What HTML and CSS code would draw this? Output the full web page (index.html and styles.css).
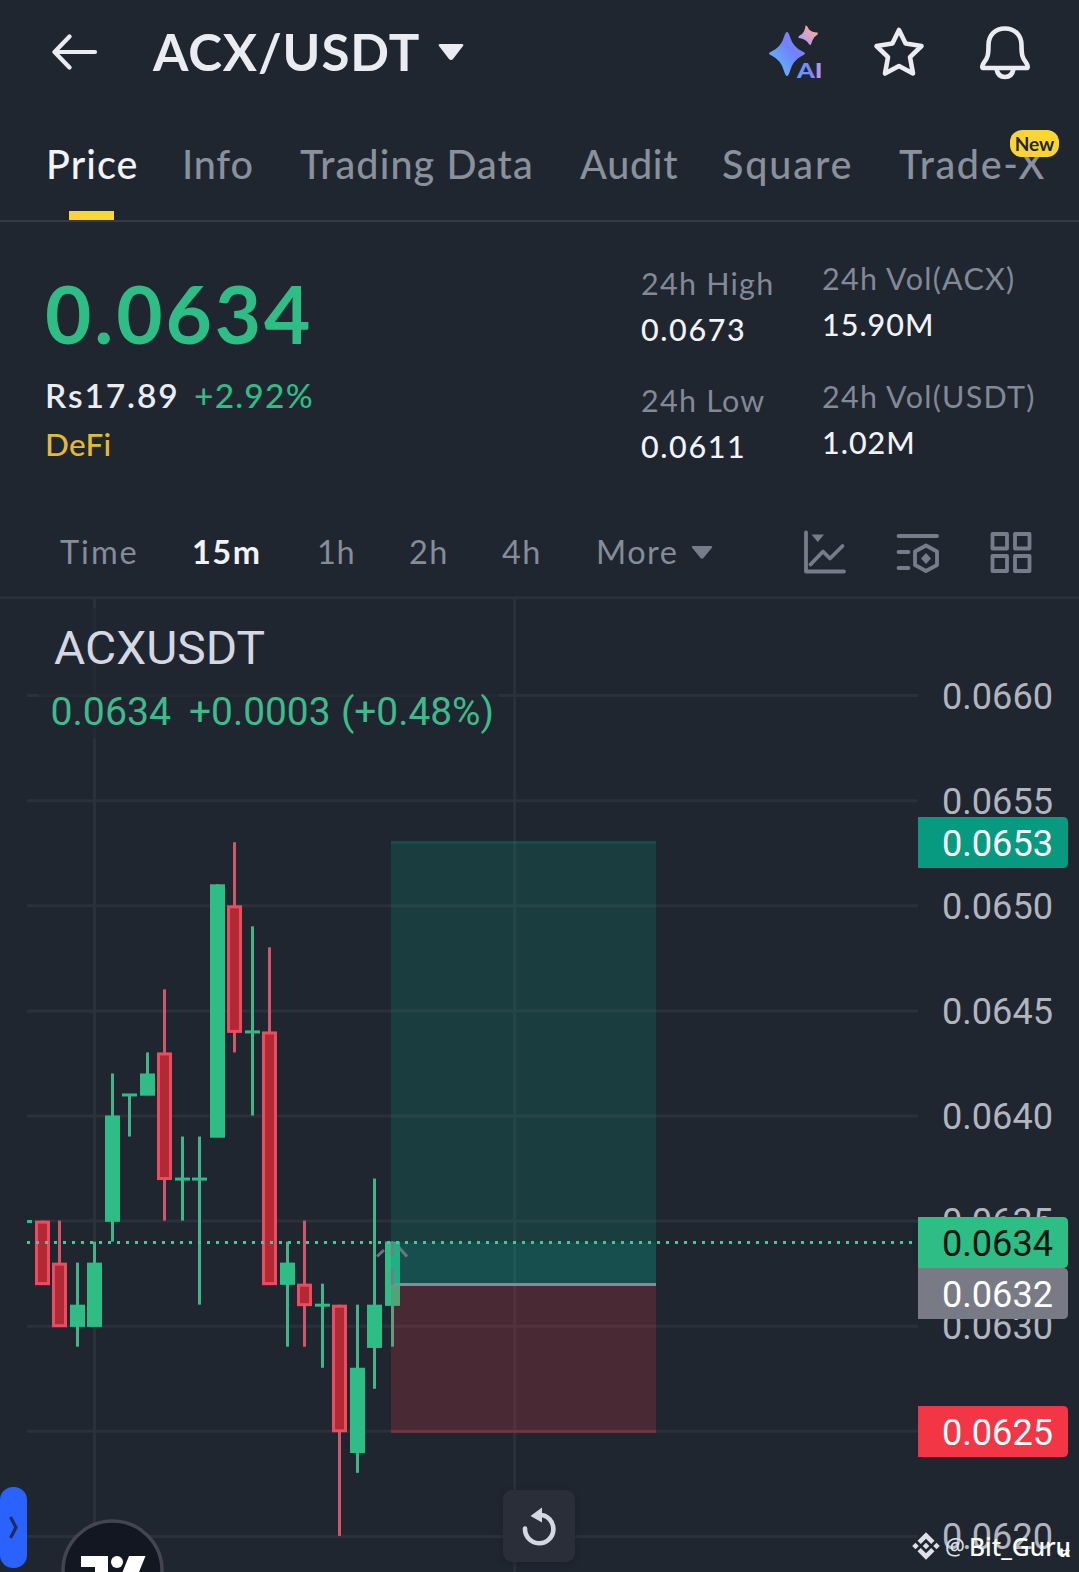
FILE: index.html
```html
<!DOCTYPE html>
<html lang="en">
<head>
<meta charset="utf-8">
<title>ACX/USDT</title>
<link rel="stylesheet" href="styles.css">
</head>
<body>
<main class="app">
  <header class="topbar">
    <svg class="back" width="46" height="36" viewBox="0 0 46 36"><path d="M17.500 2.500L2.500 18L17.500 33.500M3 18H43"/></svg>
    <h1 class="pair">ACX/USDT</h1>
    <svg class="pair-caret" width="26" height="18" viewBox="0 0 26 18"><path d="M2 1h22q2 0 1 2L15 16q-2 2-4 0L1 3Q0 1 2 1z"/></svg>
    <div class="actions">
      <svg width="56" height="56" viewBox="0 0 56 56">
        <defs>
          <linearGradient id="spark" x1="0" y1="1" x2="1" y2="0"><stop offset="0.200" stop-color="#62b2fb"/><stop offset="0.600" stop-color="#7082fb"/><stop offset="1" stop-color="#8a83fb"/></linearGradient>
          <linearGradient id="mini" x1="0" y1="1" x2="1" y2="0"><stop offset="0.200" stop-color="#b39cf5"/><stop offset="0.700" stop-color="#f0a6a8"/></linearGradient>
          <linearGradient id="ai"><stop offset="0" stop-color="#62a5fb"/><stop offset="0.550" stop-color="#7c83fb"/><stop offset="1" stop-color="#c79bea"/></linearGradient>
        </defs>
        <path fill="url(#spark)" d="M20 8Q21.500 8 23 13Q26 23 35.500 27.500Q40.500 29.500 35.500 31.500Q26 36 23 47Q20 57 17 47Q14 36 4.500 31.500Q-0.500 29.500 4.500 27.500Q14 23 17 13Q18.500 8 20 8z"/>
        <path fill="url(#mini)" d="M38.500 1.500Q40 1 42 5.500Q45 8.500 50.500 8.500Q52 10 47.500 13Q45 16 44 20.500Q42.500 22 40.500 18Q37 14.500 32 14Q30 12.500 34.500 10.500Q38 7.500 38.500 1.500z"/>
        <text class="ai-text" x="30" y="54" textLength="25.500" lengthAdjust="spacingAndGlyphs" fill="url(#ai)">AI</text>
      </svg>
      <svg class="stroke star" width="52" height="52" viewBox="0 0 52 52"><path d="M26 4L32.600 17.600L48.500 20L37 31.200L40 47.500L26 40L12 47.500L15 31.200L3.500 20L19.400 17.600Z"/></svg>
      <svg class="stroke bell" width="52" height="56" viewBox="0 0 52 56"><path d="M26 4.500C16 4.500 9.500 11.500 9.500 21C9.500 31 8.500 34.500 5 38.500Q1.500 44 5 44H47Q50.500 44 47 38.500C43.500 34.500 42.500 31 42.500 21C42.500 11.500 36 4.500 26 4.500Z"/><path d="M17.500 45C18.500 50.500 22 53 26 53S33.500 50.500 34.500 45"/></svg>
    </div>
  </header>

  <nav class="tabs">
    <a class="tab tab-price active">Price</a>
    <a class="tab tab-info">Info</a>
    <a class="tab tab-data">Trading Data</a>
    <a class="tab tab-audit">Audit</a>
    <a class="tab tab-square">Square</a>
    <a class="tab tab-x">Trade-X<span class="badge">New</span></a>
  </nav>

  <section class="ticker">
    <div class="quote">
      <div class="last">0.0634</div>
      <div class="fiat"><span class="rs">Rs17.89</span><span class="chg">+2.92%</span></div>
      <div class="tag">DeFi</div>
    </div>
    <dl class="stats stats-range">
      <dt>24h High</dt><dd>0.0673</dd>
      <dt>24h Low</dt><dd>0.0611</dd>
    </dl>
    <dl class="stats stats-vol">
      <dt>24h Vol(ACX)</dt><dd>15.90M</dd>
      <dt>24h Vol(USDT)</dt><dd>1.02M</dd>
    </dl>
  </section>

  <nav class="intervals">
    <a class="iv iv-time">Time</a>
    <a class="iv iv-15 active">15m</a>
    <a class="iv iv-1h">1h</a>
    <a class="iv iv-2h">2h</a>
    <a class="iv iv-4h">4h</a>
    <a class="iv iv-more">More<svg width="22" height="16" viewBox="0 0 22 16"><path d="M2 1h18q2 0 1 1.500L12.500 13q-1.500 1.500-3 0L1 2.500Q0 1 2 1z"/></svg></a>
    <div class="tools">
      <svg width="44" height="44" viewBox="0 0 44 44"><path d="M3 2.500V41.500H41M7.500 34.500L20 21.500L27 28.500L39.500 16"/><path class="solid" d="M8.500 4.500H21L14.800 12Z"/></svg>
      <svg width="44" height="44" viewBox="0 0 44 44"><path d="M2.500 6H41M2.500 22H12.500M2.500 38H12.500M30 15.500L41 21.500V35L30 41L19 35V21.500Z"/><path class="solid" d="M30 23L35 28.500L30 34L25 28.500Z"/></svg>
      <svg width="44" height="44" viewBox="0 0 44 44"><path d="M3.500 4H18V18.500H3.500ZM26 4H40.500V18.500H26ZM3.500 26H18V41H3.500ZM26 26H40.500V41H26Z"/></svg>
    </div>
  </nav>

  <section class="chart">
    <svg id="plot" width="1079" height="976" viewBox="0 596 1079 976">
      <g id="grid" class="grid"></g>
      <rect class="legend-shade" x="39" y="608" width="460" height="130"/>
      <g id="candles"></g>
      <rect class="profit" x="391" y="841" width="265" height="443.500"/>
      <rect class="profit" x="391" y="1242.500" width="265" height="42"/>
      <rect class="loss" x="391" y="1284.500" width="265" height="148.500"/>
      <path class="profit-edge" d="M391 842.500H656"/>
      <path class="loss-edge" d="M391 1431.500H656"/>
      <path class="entry" d="M391 1284.500H656"/>
      <path class="trend" d="M392.300 1285V1268M392.300 1256V1243M377 1256.500L384 1250M399 1247.500L407 1256.500"/>
      <path class="price-line" d="M27 1242.500H914"/>
      <text class="symbol" x="54" y="663.500" textLength="211" lengthAdjust="spacingAndGlyphs">ACXUSDT</text>
      <g class="change">
        <text x="50.500" y="725" textLength="120.500" lengthAdjust="spacingAndGlyphs">0.0634</text>
        <text x="189" y="725" textLength="141.500" lengthAdjust="spacingAndGlyphs">+0.0003</text>
        <text x="341" y="725" textLength="153" lengthAdjust="spacingAndGlyphs">(+0.48%)</text>
      </g>
      <g id="axis" class="axis"></g>
      <rect class="reset-shadow" x="502" y="1491" width="74" height="74" rx="10"/>
      <rect class="reset" x="503" y="1490" width="72" height="72" rx="9"/>
      <path class="reset-arc" d="M525 1528.500A14.200 14.200 0 1 0 539.500 1514.800"/>
      <path class="reset-head" d="M530.500 1516L542 1507.500V1522.500Z"/>
      <rect class="drawer" x="0" y="1487" width="27" height="81" rx="13"/>
      <path class="drawer-arrow" d="M10.500 1517L16 1527.500L10.500 1538"/>
      <circle class="tv" cx="112.500" cy="1570.500" r="49.500"/>
      <path class="tv-mark" d="M81 1556H108V1572H95V1567H81ZM129 1556H145.500L139 1572H122.500Z"/>
      <circle class="tv-mark" cx="117" cy="1562" r="6"/>
      <path class="mark" transform="translate(926 1546)" d="M0-13.800L8.500-5.300L5.200-2L0-7.200L-5.200-2L-8.500-5.300ZM0 13.800L8.500 5.300L5.200 2L0 7.200L-5.200 2L-8.500 5.300ZM0-3.300L3.300 0L0 3.300L-3.300 0ZM-10.500-3.300L-7.200 0L-10.500 3.300L-13.800 0ZM10.500-3.300L13.800 0L10.500 3.300L7.200 0Z"/>
      <text class="handle at" x="945" y="1554.500" textLength="20" lengthAdjust="spacingAndGlyphs">@</text>
      <text class="handle" x="969" y="1556" textLength="102" lengthAdjust="spacingAndGlyphs">Bit_Guru</text>
      <text class="tiny" x="1059" y="1556.500" textLength="11" lengthAdjust="spacingAndGlyphs">tt</text>
    </svg>
  </section>
</main>
<script src="chart.js"></script>
</body>
</html>
```
FILE: styles.css
```css
* { box-sizing: border-box; margin: 0; padding: 0; }
body { background: #1f2630; font-family: Lato, "Noto Sans", sans-serif; color: #eaecf2; }
.app { width: 1079px; height: 1572px; overflow: hidden; display: flex; flex-direction: column; }
svg { display: block; flex: none; }

.topbar { height: 104px; display: flex; align-items: center; padding: 0 48px 0 52px; }
.back { fill: none; stroke: #eaecf2; stroke-width: 4.200; stroke-linecap: round; stroke-linejoin: round; }
.pair { font-size: 51px; line-height: 60px; font-weight: 700; width: 267px; margin-left: 55px; white-space: nowrap; letter-spacing: 0.900px; }
.pair-caret { margin-left: 18px; fill: #eaecf2; }
.actions { margin-left: auto; display: flex; align-items: center; }
.star { margin-left: 50px; }
.bell { margin-left: 54px; }
.stroke { fill: none; stroke: #eaecf2; stroke-width: 4.600; stroke-linejoin: round; }
.ai-text { font: 900 21.500px Lato, sans-serif; }

.tabs { position: relative; height: 118px; border-bottom: 2px solid #353b46; display: flex; padding: 37px 0 0 46px; font-size: 39.500px; line-height: 46px; color: #8a909c; font-weight: 500; white-space: nowrap; letter-spacing: 1.100px; }
.tab { position: relative; flex: none; }
.tab-price { width: 136px; }
.tab-info { width: 118px; letter-spacing: 0.800px; }
.tab-data { width: 280px; }
.tab-audit { width: 142px; letter-spacing: 0.700px; }
.tab-square { width: 177px; letter-spacing: 1.900px; }
.tab-x { letter-spacing: 1.600px; }
.tab.active { color: #f1f3f8; }
.tab.active::after { content: ""; position: absolute; left: 23px; top: 70px; width: 45px; height: 9px; background: #fcd535; }
.badge { position: absolute; left: 111px; top: -11px; width: 49px; height: 27px; border-radius: 12px; background: #fcd535; color: #202630; font-size: 19px; line-height: 27px; font-weight: 700; text-align: center; letter-spacing: 0; }

.ticker { height: 280px; display: flex; padding-left: 45px; }
.quote { width: 596px; padding-top: 43.500px; }
.last { font-size: 80px; line-height: 94px; font-weight: 700; color: #2ebd85; letter-spacing: 2.900px; }
.fiat { display: flex; align-items: baseline; line-height: 42px; margin-top: 14px; }
.rs { font-size: 33.500px; font-weight: 600; width: 149px; letter-spacing: 1.900px; }
.chg { font-size: 33.500px; font-weight: 500; color: #2ebd85; letter-spacing: 1.200px; }
.tag { font-size: 31.500px; line-height: 40px; margin-top: 8px; color: #e3b936; font-weight: 500; letter-spacing: 0.300px; }
.stats { white-space: nowrap; font-size: 30.500px; }
.stats dt { line-height: 46px; color: #838996; letter-spacing: 1.250px; }
.stats dd { line-height: 46px; color: #f1f3f8; letter-spacing: 1.600px; margin-bottom: 25.500px; font-weight: 500; }
.stats-range { width: 181px; padding-top: 37.500px; }
.stats-vol { padding-top: 33px; }
.stats-vol dd { letter-spacing: 1px; }

.intervals { height: 94px; display: flex; padding: 29px 46px 0 60px; font-size: 32.500px; line-height: 42px; color: #868c98; }
.iv { flex: none; letter-spacing: 1.500px; }
.iv.active { color: #f1f3f8; font-weight: 700; }
.iv-time { width: 132px; letter-spacing: 2px; }
.iv-15 { width: 125px; }
.iv-1h { width: 92px; letter-spacing: 0.700px; }
.iv-2h { width: 93px; }
.iv-4h { width: 94px; }
.iv-more { display: flex; width: 117px; justify-content: space-between; }
.iv-more svg { fill: #767d8a; margin-top: 14px; }
.tools { margin: -1px 0 0 auto; display: flex; gap: 49px; }
.tools svg { fill: none; stroke: #767d8a; stroke-width: 3.800; stroke-linejoin: round; stroke-linecap: round; }
.tools .solid { fill: #767d8a; stroke: none; }

.chart { height: 976px; }
.chart text { font-family: Roboto, "Liberation Sans", sans-serif; }
.grid path { stroke: #2b313b; stroke-width: 3; fill: none; }
.legend-shade { fill: #1f2630; opacity: 0.600; }
.up { fill: #2ebd85; }
.up-wick { fill: #43b389; }
.down-wick { fill: #d0566a; }
.down { fill: #b22833; stroke: #ea4c62; stroke-width: 3; }
.profit { fill: #089981; opacity: 0.200; }
.loss { fill: #f23645; opacity: 0.200; }
.profit-edge { stroke: #089981; stroke-width: 2.500; opacity: 0.180; }
.loss-edge { stroke: #f23645; stroke-width: 2.500; opacity: 0.250; }
.entry { stroke: #878993; stroke-width: 3; }
.trend { stroke: #787b86; stroke-width: 3; fill: none; opacity: 0.900; }
.price-line { stroke: #4bc597; stroke-width: 3; stroke-dasharray: 3 6; }
.symbol { font-size: 47px; fill: #d5d8e2; }
.change { font-size: 38.500px; fill: #3fba8b; }
.axis text { font-size: 36.500px; fill: #b2b5be; }
.axis .on { fill: #fff; }
.axis .on-dark { fill: #06140f; }
.reset-shadow { fill: #151a22; opacity: 0.400; filter: blur(3px); }
.reset { fill: #292e39; }
.reset-arc { fill: none; stroke: #d5d8e2; stroke-width: 4.600; stroke-linecap: round; }
.reset-head { fill: #d5d8e2; }
.drawer { fill: #2962ff; }
.drawer-arrow { fill: none; stroke: #1d2c5c; stroke-width: 3.200; }
.tv { fill: #131722; stroke: #434651; stroke-width: 3.500; }
.tv-mark { fill: #fff; }
.mark { fill: #dfe1e8; }
.chart .handle { font-family: "Noto Sans", sans-serif; font-size: 25px; fill: #fff; font-weight: 500; }
.chart .handle.at { font-size: 23px; fill: #dfe1e8; font-weight: 400; }
.chart .tiny { font-size: 12px; fill: #fff; font-weight: 700; }
```
FILE: chart.js
```js
const NS = "http://www.w3.org/2000/svg";
const BASE = 1536.4, TICK = 21.02;
const y = (t) => BASE - TICK * t;

function add(parent, name, attrs, text) {
  const el = document.createElementNS(NS, name);
  for (const k in attrs) el.setAttribute(k, attrs[k]);
  if (text) el.textContent = text;
  document.getElementById(parent).appendChild(el);
}

for (let t = 0; t <= 40; t += 5) {
  add("grid", "path", { d: `M27 ${y(t)}H918` });
  add("axis", "text", { x: 942, y: y(t) + 13, textLength: 111, lengthAdjust: "spacingAndGlyphs" }, ((620 + t) / 10000).toFixed(4));
}
add("grid", "path", { d: "M0 597.8H1079M94.500 597V1572M514.700 597V1572" });

// [center x, high, low, top of body, bottom of body, rising]; values are ticks above 0.0620
const candles = [
  [42.5, 15, 12, 15, 12, 0], [59.5, 15, 10, 13, 10, 0], [77.5, 13, 9, 11, 10, 1],
  [94.5, 14, 10, 13, 10, 1], [112.5, 22, 14, 20, 15, 1], [129.5, 21, 19, 21, 21, 1],
  [147.5, 23, 21, 22, 21, 1], [164.5, 26, 15, 23, 17, 0], [182.5, 19, 15, 17, 17, 1],
  [199.5, 19, 11, 17, 17, 1], [217.5, 31, 19, 31, 19, 1], [234.5, 33, 23, 30, 24, 0],
  [252.5, 29, 20, 24, 24, 1], [269.5, 28, 12, 24, 12, 0], [287.5, 14, 9, 13, 12, 1],
  [304.5, 15, 9, 12, 11, 0], [322.5, 12, 8, 11, 11, 1], [339.5, 11, 0, 11, 5, 0],
  [357.5, 11, 3, 8, 4, 1], [374.5, 17, 7, 11, 9, 1], [392.5, 14, 9, 14, 11, 1]
];
for (const [x, hi, lo, top, bottom, up] of candles) {
  add("candles", "rect", { class: up ? "up-wick" : "down-wick", x: x - 1.5, y: y(hi) - 0.5, width: 3, height: y(lo) - y(hi) });
  if (up) add("candles", "rect", { class: "up", x: x - 7.5, y: y(top) - (top === bottom ? 1.5 : 0.5), width: 15, height: y(bottom) - y(top) + (top === bottom ? 3 : 1.2) });
  else add("candles", "rect", { class: "down", x: x - 6, y: y(top) + 1, width: 12, height: y(bottom) - y(top) - 1.5 });
}
add("candles", "rect", { class: "up", x: 27, y: 1220, width: 5, height: 3 });

const tags = [
  [817, "#089981", "0.0653", "on"], [1268, "#787b86", "0.0632", "on"],
  [1217, "#2ebd85", "0.0634", "on-dark"], [1406, "#f23645", "0.0625", "on"]
];
for (const [top, fill, label, cls] of tags) {
  add("axis", "path", { fill, d: `M918 ${top}H1063Q1068 ${top} 1068 ${top + 5}V${top + 46}Q1068 ${top + 51} 1063 ${top + 51}H918Z` });
  add("axis", "text", { class: cls, x: 942, y: top + 39, textLength: 111, lengthAdjust: "spacingAndGlyphs" }, label);
}
```
